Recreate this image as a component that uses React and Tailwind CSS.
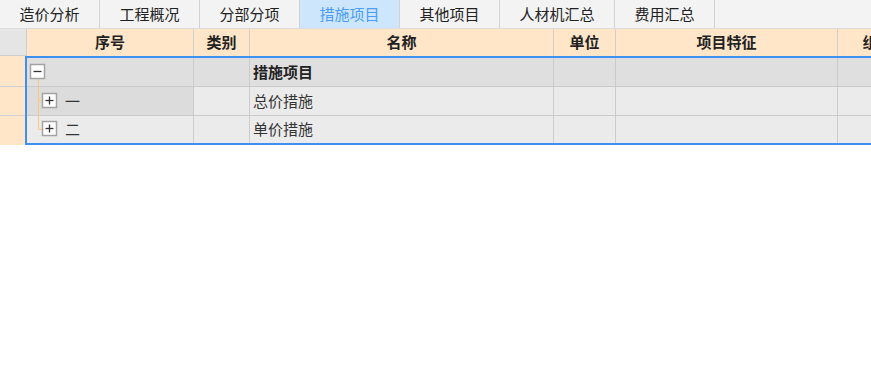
const tabs = [
  { label: "造价分析", w: "w-[100px]" },
  { label: "工程概况", w: "w-[100px]" },
  { label: "分部分项", w: "w-[100px]" },
  { label: "措施项目", w: "w-[100px]", active: true },
  { label: "其他项目", w: "w-[100px]" },
  { label: "人材机汇总", w: "w-[115px]" },
  { label: "费用汇总", w: "w-[100px]" },
];

// column widths include the 1px right border
const cols = [
  { key: "seq", title: "序号", w: "w-[167px]" },
  { key: "type", title: "类别", w: "w-[56px]" },
  { key: "name", title: "名称", w: "w-[304px]" },
  { key: "unit", title: "单位", w: "w-[62px]" },
  { key: "feat", title: "项目特征", w: "w-[222px]" },
  { key: "way", title: "组价方式", w: "w-[110px]" },
];

const TreeBox = ({ x, y, open }) => (
  <g>
    <rect x={x + 0.5} y={y + 0.5} width="14" height="14" fill="#fff" stroke="#a3a3a3" strokeWidth="1.5" />
    <line x1={x + 3.5} y1={y + 7.5} x2={x + 11.5} y2={y + 7.5} stroke="#333" strokeWidth="1.3" />
    {!open && <line x1={x + 7.5} y1={y + 3.5} x2={x + 7.5} y2={y + 11.5} stroke="#333" strokeWidth="1.3" />}
  </g>
);

const rows = [
  {
    h: "h-[29px]",
    bg: "bg-[#dfdfdf]",
    seqBg: "bg-[#dfdfdf]",
    name: "措施项目",
    bold: true,
    tree: (
      <svg width="20" height="28" className="shrink-0">
        <line x1="11.5" y1="21" x2="11.5" y2="28" stroke="#fcc77c" strokeWidth="1" />
        <TreeBox x={3} y={6} open />
      </svg>
    ),
  },
  {
    h: "h-[29px]",
    bg: "bg-[#ebebeb]",
    seqBg: "bg-[#dcdcdc]",
    name: "总价措施",
    label: "一",
    tree: (
      <svg width="32" height="28" className="shrink-0">
        <line x1="11.5" y1="0" x2="11.5" y2="28" stroke="#fcc77c" strokeWidth="1" />
        <line x1="11.5" y1="13.5" x2="15" y2="13.5" stroke="#fcc77c" strokeWidth="1" />
        <TreeBox x={15} y={6} />
      </svg>
    ),
  },
  {
    h: "h-[27px]",
    bg: "bg-[#ebebeb]",
    seqBg: "bg-[#ebebeb]",
    name: "单价措施",
    label: "二",
    last: true,
    tree: (
      <svg width="32" height="27" className="shrink-0">
        <line x1="11.5" y1="0" x2="11.5" y2="13.5" stroke="#fcc77c" strokeWidth="1" />
        <line x1="11.5" y1="13.5" x2="15" y2="13.5" stroke="#fcc77c" strokeWidth="1" />
        <TreeBox x={15} y={5} />
      </svg>
    ),
  },
];

export default function App() {
  return (
    <div className="w-[871px] h-[384px] overflow-hidden bg-white text-[15px] text-[#333] font-['Microsoft_YaHei','Noto_Sans_CJK_SC',sans-serif]">
      {/* tab strip */}
      <div className="flex h-[29px] bg-[#f3f3f3] border-b border-[#dcdcdc]">
        {tabs.map((t) => (
          <div
            key={t.label}
            className={
              t.w +
              " shrink-0 flex items-center justify-center border-r border-[#d2d2d2] " +
              (t.active ? "bg-[#cde6fc] text-[#4a9cf7]" : "text-[#222]")
            }
          >
            {t.label}
          </div>
        ))}
      </div>

      {/* header */}
      <div className="flex h-[27px] bg-[#ffe6c8] font-bold text-[#222]">
        <div className="w-[27px] shrink-0 bg-[#e5e5e5] border-r border-b border-[#cfcfcf]" />
        {cols.map((c) => (
          <div
            key={c.key}
            className={c.w + " shrink-0 flex items-center justify-center border-r border-[#d0d0d0]"}
          >
            {c.title}
          </div>
        ))}
      </div>

      {/* body */}
      <div className="flex">
        <div className="w-[25px] shrink-0 flex flex-col bg-[#ffe6c8]">
          <div className="h-[31px] border-b border-[#d0d0d0]" />
          <div className="h-[29px] border-b border-[#d0d0d0]" />
          <div className="h-[29px]" />
        </div>
        <div className="flex-1 flex flex-col border-2 border-r-0 border-[#3d8ff2]">
          {rows.map((r) => (
            <div
              key={r.name}
              className={r.h + " flex " + r.bg + (r.last ? "" : " border-b border-[#cbcbcb]")}
            >
              <div className={"w-[167px] shrink-0 flex items-center border-r border-[#cbcbcb] " + r.seqBg}>
                {r.tree}
                {r.label && <span className="ml-[6px]">{r.label}</span>}
              </div>
              <div className="w-[56px] shrink-0 border-r border-[#cbcbcb]" />
              <div className={"w-[304px] shrink-0 flex items-center pl-[3px] border-r border-[#cbcbcb]" + (r.bold ? " font-bold text-[#222]" : "")}>
                {r.name}
              </div>
              <div className="w-[62px] shrink-0 border-r border-[#cbcbcb]" />
              <div className="w-[222px] shrink-0 border-r border-[#cbcbcb]" />
              <div className="w-[110px] shrink-0 border-r border-[#cbcbcb]" />
            </div>
          ))}
        </div>
      </div>
    </div>
  );
}
